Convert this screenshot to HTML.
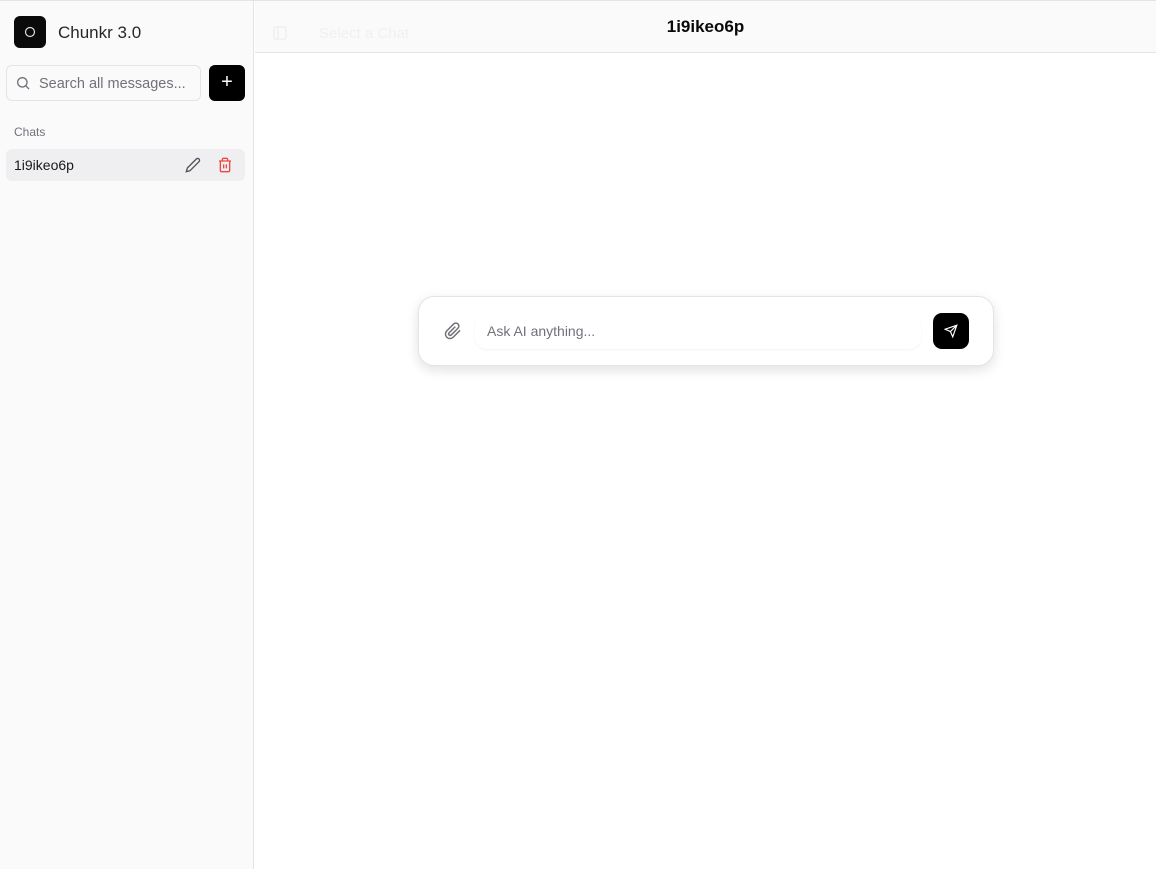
<!DOCTYPE html>
<html><head><style>
*{box-sizing:border-box;margin:0;padding:0}
body{width:1156px;height:869px;font-family:"Liberation Sans",sans-serif;background:#fff;position:relative;overflow:hidden}
.topline{position:absolute;left:0;top:0;right:0;height:1px;background:#e4e4e7;z-index:5}
.side{position:absolute;left:0;top:0;width:254px;height:869px;background:#fafafa;border-right:1px solid #e4e4e7}
.logo{position:absolute;left:14px;top:16px;width:32px;height:32px;border-radius:6px;background:#0a0a0a}
.title{position:absolute;left:58px;top:23px;font-size:17px;color:#27272a}
.search{position:absolute;left:6px;top:65px;width:195px;height:36px;border:1px solid #e4e4e7;border-radius:6px;background:#fafafa}
.search span{position:absolute;left:32px;top:10px;font-size:14.5px;color:#71717a}
.plus{position:absolute;left:209px;top:65px;width:36px;height:36px;background:#000;border-radius:6px;color:#fff;font-size:20px;text-align:center;line-height:35px}
.chats{position:absolute;left:14px;top:125px;font-size:12px;color:#71717a}
.item{position:absolute;left:6px;top:149px;width:239px;height:32px;background:#efeff1;border-radius:6px}
.item span{position:absolute;left:8px;top:8px;font-size:14px;color:#18181b}
.head{position:absolute;left:255px;top:0;right:0;height:53px;background:#fafafa;border-bottom:1px solid #e4e4e7}
.head .t{position:absolute;left:0;right:0;top:17px;text-align:center;font-size:17px;font-weight:bold;color:#09090b}
.box{position:absolute;left:418px;top:296px;width:576px;height:70px;border:1px solid #e4e4e7;border-radius:16px;background:#fff;box-shadow:0 4px 12px rgba(0,0,0,.12)}
.inp{position:absolute;left:56px;top:16px;width:446px;height:36px;border-radius:12px;box-shadow:0 1px 2px rgba(0,0,0,.05)}
.inp span{position:absolute;left:12px;top:10px;font-size:14px;color:#71717a}
.send{position:absolute;left:514px;top:16px;width:36px;height:36px;background:#000;border-radius:9px}
</style></head><body>
<div class="topline"></div>
<div class="side">
<div class="logo"><svg width="32" height="32"><circle cx="16" cy="16" r="4.5" fill="none" stroke="#ddd" stroke-width="1.2"/></svg></div>
<div class="title">Chunkr 3.0</div>
<div class="search"><svg style="position:absolute;left:8px;top:9px" width="16" height="16" viewBox="0 0 24 24" fill="none" stroke="#71717a" stroke-width="2"><circle cx="11" cy="11" r="7"/><path d="M21 21l-5-5"/></svg><span>Search all messages...</span></div>
<div class="plus">+</div>
<div class="chats">Chats</div>
<div class="item"><span>1i9ikeo6p</span>
<svg style="position:absolute;left:179px;top:8px" width="16" height="16" viewBox="0 0 24 24" fill="none" stroke="#52525b" stroke-width="2"><path d="M17 3a2.8 2.8 0 0 1 4 4L7.5 20.5 2 22l1.5-5.5Z"/></svg>
<svg style="position:absolute;left:211px;top:8px" width="16" height="16" viewBox="0 0 24 24" fill="none" stroke="#ef4444" stroke-width="2"><path d="M3 6h18M19 6v14a2 2 0 0 1-2 2H7a2 2 0 0 1-2-2V6M8 6V4a2 2 0 0 1 2-2h4a2 2 0 0 1 2 2v2M10 11v6M14 11v6"/></svg></div>
</div>
<div class="head"><div class="t">1i9ikeo6p</div>
<svg style="position:absolute;left:17px;top:25px" width="16" height="16" viewBox="0 0 24 24" fill="none" stroke="#eee" stroke-width="2"><rect x="3" y="3" width="18" height="18" rx="2"/><path d="M9 3v18"/></svg>
<span style="position:absolute;left:64px;top:25px;font-size:15px;color:#f0f0f0">Select a Chat</span></div>
<div class="box">
<svg style="position:absolute;left:25px;top:25px" width="18" height="18" viewBox="0 0 24 24" fill="none" stroke="#71717a" stroke-width="2"><path d="M21.4 11.1l-9.2 9.2a6 6 0 0 1-8.5-8.5l9.2-9.2a4 4 0 0 1 5.7 5.7l-9.2 9.2a2 2 0 0 1-2.8-2.8l8.5-8.5"/></svg>
<div class="inp"><span>Ask AI anything...</span></div>
<div class="send"><svg style="position:absolute;left:11px;top:11px" width="14" height="14" viewBox="0 0 24 24" fill="none" stroke="#fff" stroke-width="2"><path d="M22 2L11 13M22 2l-7 20-4-9-9-4Z"/></svg></div>
</div>
</body></html>
